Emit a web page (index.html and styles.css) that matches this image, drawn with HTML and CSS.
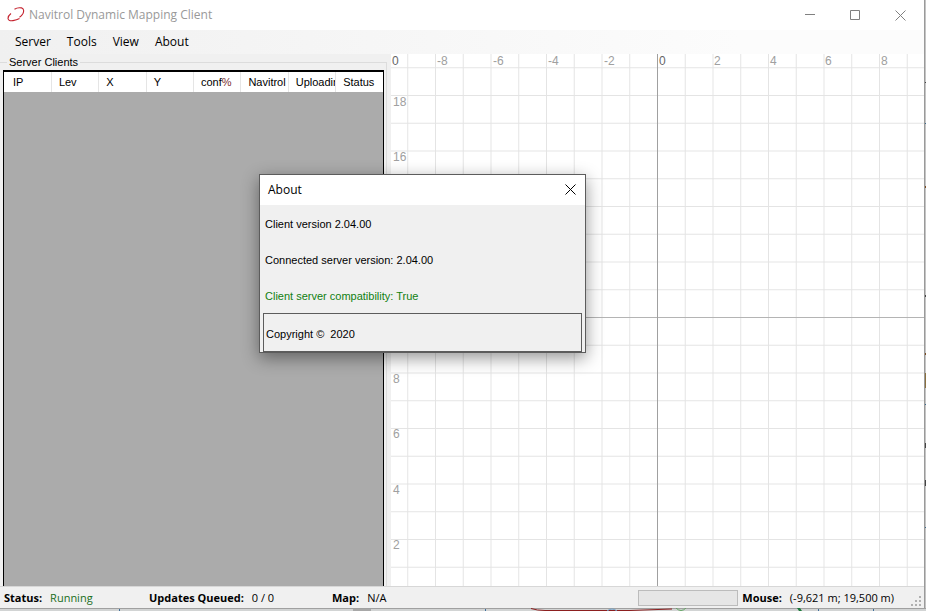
FILE: index.html
```html
<!DOCTYPE html>
<html lang="en">
<head>
<meta charset="utf-8">
<title>Navitrol Dynamic Mapping Client</title>
<link rel="stylesheet" href="styles.css">
</head>
<body>
<div class="window">
  <header class="titlebar">
    <svg class="logo" width="18" height="16" viewBox="0 0 18 16" aria-hidden="true">
      <path d="M7.500 2.300C9 1.200 12 .5 14.500 .9C17 1.500 17 4.500 16 6.500C15.200 8 14 9.300 12.500 10.300M4 6.500C2 8 1 9.800 1 11.500C1.200 13.600 3.500 14 6 13.600C8.500 13.200 10.500 12.600 12.500 11.500"/>
    </svg>
    <h1 class="title">Navitrol Dynamic Mapping Client</h1>
    <div class="captions">
      <button class="caption" aria-label="Minimize"><svg width="11" height="11"><path d="M0 4.500H10"/></svg></button>
      <button class="caption" aria-label="Maximize"><svg width="11" height="11"><path d="M.5 .5H9.500V9.500H.5Z"/></svg></button>
      <button class="caption" aria-label="Close"><svg width="11" height="11"><path d="M.5 .5L10.500 10.500M10.500 .5L.5 10.500"/></svg></button>
    </div>
  </header>
  <nav class="menubar">
    <button class="menu">Server</button>
    <button class="menu">Tools</button>
    <button class="menu">View</button>
    <button class="menu">About</button>
  </nav>
  <main class="workspace">
    <fieldset class="clients">
      <legend>Server Clients</legend>
      <div class="grid-box">
        <table class="grid">
          <thead>
            <tr><th>IP</th><th>Lev</th><th>X</th><th>Y</th><th>conf<span class="percent">%</span></th><th>Navitrol</th><th>Uploading</th><th>Status</th></tr>
          </thead>
        </table>
      </div>
    </fieldset>
    <section class="map" aria-label="Map">
      <svg class="plot" width="100%" height="100%">
        <defs>
          <pattern id="cells" x="16.250" y="13.250" width="27.750" height="27.750" patternUnits="userSpaceOnUse">
            <path class="cell" d="M.5 0V27.750M0 .5H27.750"/>
          </pattern>
        </defs>
        <rect width="100%" height="100%" fill="url(#cells)"/>
        <path class="axis-x" d="M0 263.500H2000"/>
        <path class="axis-y" d="M266.500 0V2000"/>
        <g class="labels">
          <text class="origin" x="1" y="11">0</text>
          <text x="46" y="11">-8</text>
          <text x="102" y="11">-6</text>
          <text x="157" y="11">-4</text>
          <text x="213" y="11">-2</text>
          <text class="origin" x="268" y="11">0</text>
          <text x="323" y="11">2</text>
          <text x="379" y="11">4</text>
          <text x="434" y="11">6</text>
          <text x="490" y="11">8</text>
          <text x="2" y="52">18</text>
          <text x="2" y="107">16</text>
          <text x="2" y="329">8</text>
          <text x="2" y="384">6</text>
          <text x="2" y="440">4</text>
          <text x="2" y="495">2</text>
        </g>
      </svg>
    </section>
  </main>
  <footer class="statusbar">
    <div class="stat stat-run"><b>Status:</b><span class="running">Running</span></div>
    <div class="stat stat-queue"><b>Updates Queued:</b><span>0 / 0</span></div>
    <div class="stat"><b>Map:</b><span>N/A</span></div>
    <div class="stat stat-mouse">
      <progress class="progress" value="0" max="100" aria-label="Progress"></progress>
      <b>Mouse:</b><span>(-9,621 m; 19,500 m)</span>
    </div>
    <svg class="grip" width="10" height="10" aria-hidden="true">
      <path d="M8 0h2v2h-2zM4 4h2v2h-2zM8 4h2v2h-2zM0 8h2v2h-2zM4 8h2v2h-2zM8 8h2v2h-2z"/>
    </svg>
  </footer>

  <section class="dialog" role="dialog" aria-labelledby="about-title">
    <header class="dialog-head">
      <h2 class="dialog-title" id="about-title">About</h2>
      <button class="dialog-close" aria-label="Close"><svg width="11" height="11"><path d="M.5 .5L10.500 10.500M10.500 .5L.5 10.500"/></svg></button>
    </header>
    <p class="line">Client version 2.04.00</p>
    <p class="line">Connected server version: 2.04.00</p>
    <p class="line ok">Client server compatibility: True</p>
    <p class="copyright">Copyright <span class="mark">©</span> 2020</p>
  </section>
</div>
<svg class="edge-right" width="2" height="100%" aria-hidden="true">
  <rect width="2" height="100%" fill="#c4c4c4"/>
  <path fill="#9a9a9a" d="M0 0h1v611h-1z"/>
  <path fill="#444" d="M1 82h1v1h-1zM1 295h1v2h-1zM1 443h1v5h-1zM1 480h1v6h-1z"/>
  <path fill="#3d6a8c" d="M1 123h1v1h-1zM1 404h1v1h-1zM1 527h1v1h-1z"/>
  <path fill="#7a4a20" d="M1 186h1v2h-1zM1 353h1v2h-1z"/>
  <path fill="#8a7040" d="M1 373h1v15h-1z"/>
</svg>
<svg class="edge-bottom" width="100%" height="3" aria-hidden="true">
  <rect width="100%" height="3" fill="#d2d4d4"/>
  <path fill="#a0a0a0" d="M0 0h2000v1h-2000z"/>
  <path fill="#a8a8a8" d="M353 1h18v2h-18z"/>
  <path fill="#3f6f9c" d="M119 1h1v2h-1zM485 1h1v2h-1zM818 1h1v2h-1zM873 1h1v2h-1z"/>
  <path fill="none" stroke="#8c1f1f" stroke-width="1" d="M531 .5Q537 2.500 545 2.500H630L672 1"/>
  <path fill="none" stroke="#6fa0c8" d="M607 3Q612 -1 617 3"/>
  <path fill="none" stroke="#62a462" d="M676 0Q681 5 686 0"/>
  <path fill="#1d7a3a" d="M797 0h3l2 3h-3z"/>
</svg>
</body>
</html>
```
FILE: styles.css
```css
* {
  box-sizing: border-box;
}

body {
  margin: 0;
  height: 100vh;
  display: grid;
  grid-template-columns: 1fr 2px;
  grid-template-rows: 1fr 3px;
  overflow: hidden;
  background: #f0f0f0;
  color: #000;
  font: 12px/16px "Open Sans", "Noto Sans", sans-serif;
}

h1,
h2,
p {
  margin: 0;
  font-size: 12px;
  font-weight: 400;
}

button {
  border: 0;
  padding: 0;
  background: none;
  color: inherit;
  font: inherit;
}

button path {
  fill: none;
  stroke: currentColor;
}

.window {
  position: relative;
  display: flex;
  flex-direction: column;
  min-height: 0;
}

.edge-right {
  display: block;
}

.edge-bottom {
  display: block;
  grid-column: 1 / -1;
}

.titlebar {
  display: flex;
  align-items: center;
  height: 30px;
  padding-left: 7px;
  background: #fff;
  color: #999;
}

.logo path {
  fill: none;
  stroke: #c4202c;
  stroke-width: 1.1;
}

.title {
  margin-left: 4px;
}

.captions {
  display: flex;
  margin-left: auto;
  margin-right: 1px;
  color: #808080;
}

.caption {
  display: grid;
  place-items: center;
  width: 45px;
  height: 29px;
}

.menubar {
  display: flex;
  align-items: center;
  height: 24px;
  padding-left: 9px;
  background: linear-gradient(90deg, #f0f0f0, #fcfcfc 80%);
}

.menu {
  padding: 0 6px;
  margin-right: 4px;
}

.workspace {
  display: flex;
  flex: 1;
  min-height: 0;
}

.clients {
  display: flex;
  flex: 0 0 387px;
  min-width: 0;
  margin: 0 4px 0 0;
  padding: 0 2px 0 3px;
  border: 1px solid #dcdcdc;
  border-width: 1px 1px 0 0;
  font: 11px/16px "Liberation Sans", Arial, sans-serif;
}

.clients legend {
  margin-left: 4px;
  padding: 0 2px;
  font-size: 11px;
  line-height: 16px;
}

.grid-box {
  flex: 1;
  height: 100%;
  border: 1px solid #000;
  border-width: 2px 1px 0;
  background: #ababab;
}

.grid {
  width: 100%;
  table-layout: fixed;
  border-collapse: collapse;
  background: #fff;
}

.grid th {
  height: 20px;
  padding: 0 0 0 7px;
  border-right: 1px solid #e5e5e5;
  overflow: hidden;
  font-weight: 400;
  text-align: left;
  white-space: nowrap;
}

.grid th:first-child {
  padding-left: 9px;
}

.grid th:last-child {
  border-right: 0;
}

.percent {
  color: #7a3030;
}

.map {
  flex: 1;
  min-width: 0;
  background: #fff;
}

.plot {
  display: block;
}

.cell {
  fill: none;
  stroke: #e4e4e4;
}

.axis-x {
  stroke: #b4b4b4;
}

.axis-y {
  stroke: #a0a0a0;
}

.labels {
  fill: #a0a0a0;
  font: 12px "Liberation Sans", Arial, sans-serif;
}

.origin {
  fill: #666;
}

.statusbar {
  display: flex;
  align-items: center;
  height: 22px;
  padding: 0 3px 0 4px;
  border-top: 1px solid #d7d7d7;
  background: #f0f0f0;
  font-size: 11px;
  white-space: nowrap;
}

.stat {
  display: flex;
  gap: 8px;
}

.stat-run {
  width: 145px;
}

.stat-queue {
  width: 183px;
}

.stat-mouse {
  align-items: center;
  margin-left: auto;
  margin-right: 17px;
}

.running {
  color: #1a6e1a;
}

.progress {
  appearance: none;
  width: 100px;
  height: 16px;
  margin-right: -4px;
  border: 1px solid #bcbcbc;
  background: #e6e6e6;
}

.progress::-webkit-progress-bar {
  background: #e6e6e6;
}

.grip {
  align-self: flex-end;
  margin-bottom: 2px;
}

.grip path {
  fill: #b0b0b0;
}

.dialog {
  position: absolute;
  top: 174px;
  left: 259px;
  width: 327px;
  border: 1px solid #5c5c5c;
  background: #f0f0f0;
  box-shadow: 0 5px 16px rgba(0, 0, 0, 0.42);
  font: 11px/34px "Liberation Sans", Arial, sans-serif;
}

.dialog-head {
  display: flex;
  align-items: center;
  justify-content: space-between;
  height: 30px;
  padding-left: 8px;
  background: #fff;
  font: 12px/16px "Open Sans", "Noto Sans", sans-serif;
}

.dialog-close {
  display: grid;
  place-items: center;
  width: 30px;
  height: 28px;
  align-self: flex-start;
}

.line {
  padding: 2px 0 0 5px;
  font-size: 11px;
}

.ok {
  color: #108010;
}

.copyright {
  margin: 0 3px;
  padding: 3px 0 0 2px;
  border: 1px solid #5c5c5c;
  font-size: 11px;
}

.mark {
  padding-right: 3px;
}
```
